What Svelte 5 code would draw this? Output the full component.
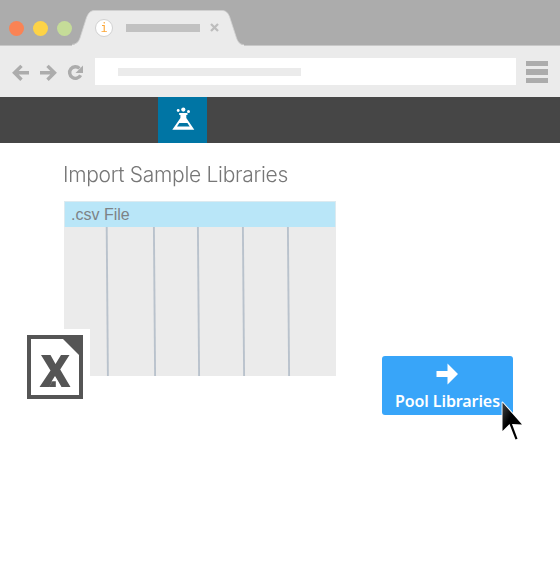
<script>
  const dots = ['#fa8354', '#fdd347', '#c5dc98'];
  const dividers = [42.7, 89.9, 133.9, 178.9, 223.9];
</script>

<div class="window">
  <header>
    <div class="tabs">
      <div class="dots">
        {#each dots as color}
          <i style="background: {color}"></i>
        {/each}
      </div>
      <div class="tab">
        <svg class="shape" width="172" height="37" viewBox="0 0 172 37">
          <path d="M0 36C4.500 35.500 6.500 33 8 29L14.500 8.500C16.500 4 18.500 1.500 22.500 1.500H150C154 1.500 156 4 157.500 7.500L164.500 29C166 33 168 36 172 36V37H0Z" fill="#ebebeb" />
          <path d="M0 35.500C4.500 35 6.500 33 8 29L14.500 8.500C16.500 4 18.500 1.500 22.500 1.500H150C154 1.500 156 4 157.500 7.500L164.500 29C166 33 168 35.500 172 35.500" fill="none" stroke="#d0d0d0" stroke-width=".8" />
        </svg>
        <div class="tab-content">
          <span class="info">i</span>
          <b></b>
          <svg width="9" height="9" viewBox="0 0 9 9"><path d="M1 1L8 8M8 1L1 8" stroke="#bdbdbd" stroke-width="2.300" /></svg>
        </div>
      </div>
    </div>
    <div class="toolbar">
      <svg class="controls" width="95" height="50" viewBox="0 0 95 50" fill="none" stroke="#acacac" stroke-width="3.400">
        <path d="M29 26.800H15M21.500 19.900L14.500 26.800L21.500 33.700" />
        <path d="M40 26.800H54M47.500 19.900L54.500 26.800L47.500 33.700" />
        <path d="M79.500 22.400A5.800 5.800 0 1 0 80.600 29.200" />
        <path d="M83 19.500V27H75.500Z" fill="#acacac" stroke="none" />
      </svg>
      <div class="address"><span></span></div>
      <div class="menu"><i></i><i></i><i></i></div>
    </div>
  </header>

  <nav>
    <div class="active">
      <svg width="49" height="46" viewBox="0 0 49 46" fill="#fff">
        <circle cx="20.200" cy="13.500" r="1.400" />
        <circle cx="25.300" cy="12.600" r="2.100" />
        <circle cx="30.500" cy="14.500" r="1.500" />
        <path fill-rule="evenodd" d="M21.200 16H29.500V18H28.300V21L36.300 32.700H14.300L22.400 21V18H21.200ZM21.300 26L19 29.400H31.700L29.400 26Z" />
      </svg>
    </div>
  </nav>

  <main>
    <section class="import">
      <h1>Import Sample Libraries</h1>
      <div class="file">
        <div class="file-name">.csv File</div>
        <svg width="272" height="149" viewBox="0 0 272 149">
          {#each dividers as x}
            <path d="M{x} 0L{x + 1.200} 149" stroke="#b9c2cc" stroke-width="1.900" />
          {/each}
        </svg>
        <div class="sheet">
          <svg width="56" height="64" viewBox="0 0 56 64">
            <path d="M0 0H56V64H0Z" fill="#555" />
            <path d="M4 4H36L52 20V60H4Z" fill="#fff" />
            <path d="M14 20H23.500L28.500 29L34 20H42.500L33.200 34.500L43.500 52H34L28 42L22.200 52H12.500L23.500 35.500Z" fill="#555" />
            <path d="M24.500 46.500L28 41L31.500 46.800L34.500 52H28.800V46.500Z" fill="#fff" />
            <path d="M25.500 46.300H28.800V52H21.800Z" fill="#555" />
          </svg>
        </div>
      </div>
    </section>
    <button>
      <svg class="arrow" width="24" height="24" viewBox="0 0 24 24"><path d="M1.500 9H12.500V1.500L23 12L12.500 22.500V15H1.500Z" fill="#fff" /></svg>
      <span>Pool Libraries</span>
      <svg class="cursor" width="26" height="44" viewBox="0 0 26 44">
        <defs>
          <linearGradient id="pointer" x1="0" y1="0" x2="1" y2="1">
            <stop offset=".1" stop-color="#333" />
            <stop offset=".4" stop-color="#000" />
          </linearGradient>
        </defs>
        <path d="M2.500 2.500V31L9.500 24L15.500 39.500L17.500 38.700L12 24L22 24.500Z" fill="#000" stroke="#fff" stroke-width="1.800" stroke-linejoin="round" />
        <path d="M2.500 2.500V31L9.500 24L15.500 39.500L17.500 38.700L12 24L22 24.500Z" fill="url(#pointer)" />
      </svg>
    </button>
  </main>
</div>

<style>
  :global(body) { background: #fff; }
  .window { width: 560px; height: 580px; overflow: hidden; background: #fff; font-family: "Liberation Sans", Arial, sans-serif; }
  header { height: 97px; background: #ebebeb; }
  .tabs { box-sizing: border-box; height: 46px; background: #acacac; border-bottom: 1px solid #c8c8c8; display: flex; }
  .dots { width: 72px; flex: none; padding: 21px 0 0 9px; box-sizing: border-box; display: flex; gap: 9px; }
  .dots i { width: 15px; height: 15px; flex: none; border-radius: 50%; }
  .tab { position: relative; width: 172px; height: 37px; margin-top: 9px; flex: none; }
  .shape { position: absolute; left: 0; top: 0; }
  .tab-content { position: relative; display: flex; align-items: center; height: 37px; padding-left: 23px; }
  .info { box-sizing: border-box; width: 18px; height: 18px; border: 1px solid #d0d0d0; border-radius: 50%; background: #fff; color: #fba636; font: 12px/16px "DejaVu Sans Mono", monospace; text-align: center; will-change: transform; }
  .tab-content b { width: 74px; height: 8px; margin: 1px 10px 0 13px; background: #c1c1c1; }
  .toolbar { display: flex; height: 51px; }
  .controls { flex: none; }
  .address { width: 421px; height: 27px; margin-top: 12px; background: #fff; flex: none; padding: 10px 0 0 23px; box-sizing: border-box; }
  .address span { display: block; width: 183px; height: 8px; background: #ebebeb; }
  .menu { display: flex; flex-direction: column; gap: 3px; margin: 14.500px 0 0 10px; }
  .menu i { width: 22px; height: 5.500px; background: #acacac; }
  nav { height: 46px; background: #464646; padding-left: 158px; }
  .active { width: 49px; height: 46px; background: #0075a4; }
  nav svg { display: block; }
  main { display: flex; }
  .import { width: 272px; margin-left: 64px; }
  h1 { margin: 18px 0 0 -1px; height: 40px; font: 300 21px/28px Inter, "Liberation Sans", sans-serif; letter-spacing: -.3px; color: #777; white-space: nowrap; will-change: transform; }
  .file { position: relative; width: 272px; height: 175px; background: #ebebeb; }
  .file-name { box-sizing: border-box; height: 26px; border: 1px solid #dceaf0; border-width: 1px 1px 0; background: #b9e6f8; color: #7d8286; padding-left: 6px; font-size: 16px; line-height: 25px; }
  .file > svg { display: block; }
  .sheet { position: absolute; left: -43px; top: 128px; width: 63px; height: 64px; padding: 6px 0 0 6px; background: #fff; }
  .sheet svg { display: block; }
  button { position: relative; width: 131px; height: 59px; margin: 213px 0 0 46px; padding: 6px 0 0; border: 0; border-radius: 3px; background: #38a5f9; display: flex; flex-direction: column; align-items: center; color: #fff; }
  .arrow { margin-right: 2px; }
  button span { font: 600 16px/22px "Noto Sans", sans-serif; margin-top: 4px; white-space: nowrap; letter-spacing: -.1px; }
  .cursor { position: absolute; left: 118px; top: 44px; }
</style>
